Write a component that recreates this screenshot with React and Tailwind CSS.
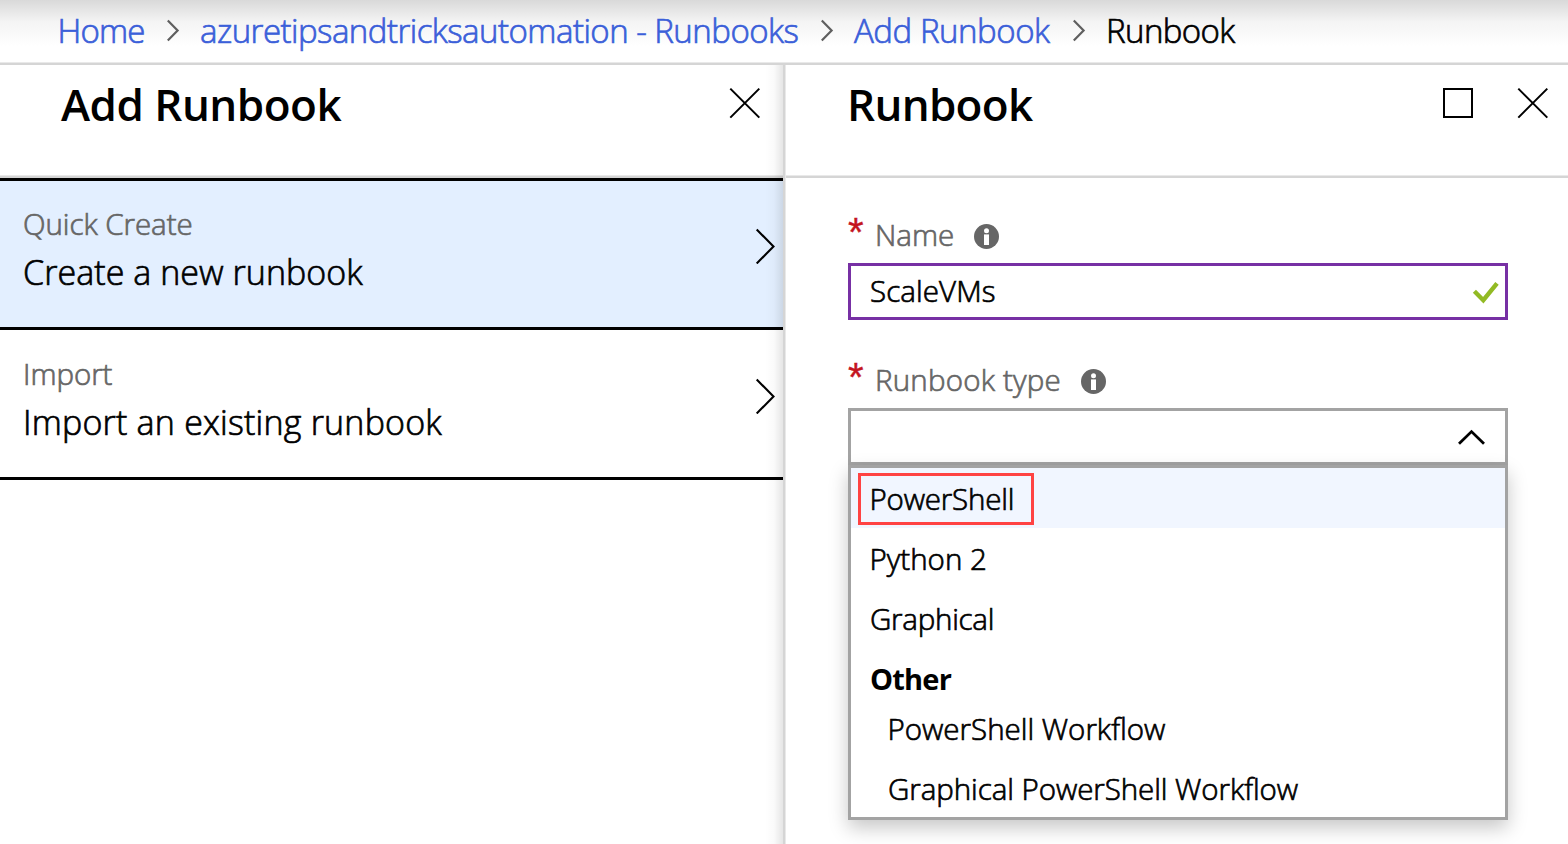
import React from "react";

const thin = "font-light [-webkit-text-stroke:0.7px_currentColor]";

function Separator() {
  return (
    <svg className="mt-0.5 h-6 w-4 shrink-0" viewBox="0 0 16 24" fill="none" stroke="#5f5f5f" strokeWidth="2.2">
      <path d="M0.8 2.6 10.6 12.6 0.8 22.6" />
    </svg>
  );
}

function CloseIcon() {
  return (
    <svg className="h-8 w-8" viewBox="0 0 32 32" fill="none" stroke="#000" strokeWidth="2">
      <path d="M1.3 1.6 30.3 30.6M30.3 1.6 1.3 30.6" />
    </svg>
  );
}

function InfoIcon() {
  return (
    <svg className="h-[25px] w-[25px]" viewBox="0 0 25 25">
      <circle cx="12.5" cy="12.5" r="12.5" fill="#666" />
      <circle cx="12.5" cy="6.7" r="2.5" fill="#fff" />
      <path d="M10 10.4h5V21h-5z" fill="#fff" />
    </svg>
  );
}

function Divider() {
  return (
    <div className="shrink-0">
      <div className="h-px bg-[#e9e9e9]" />
      <div className="h-0.5 bg-[#d5d5d5]" />
    </div>
  );
}

function Option({ kind, title, titleSpacing, active }) {
  return (
    <div className={`flex items-start justify-between border-b-3 border-black pl-[23px] ${active ? "h-[149px] bg-[#e3efff] pt-[19px]" : "h-[150px] bg-white pt-5"}`}>
      <div>
        <div className={`text-[29.5px] leading-[48px] tracking-[-0.05px] text-[#666] ${thin}`}>{kind}</div>
        <div className={`text-[34px] leading-[49px] ${titleSpacing} ${thin}`}>{title}</div>
      </div>
      <svg className="mt-7 mr-[7px] h-9 w-[21px]" viewBox="0 0 21 36" fill="none" stroke="#000" strokeWidth="2.1">
        <path d="M1.7 1.5 18.5 18.5 1.7 35.5" />
      </svg>
    </div>
  );
}

function Label({ children, spacing }) {
  return (
    <div className="flex h-11 items-center">
      <span className="h-11 w-[27px] font-['Liberation_Sans'] text-[40px] leading-[42px] text-[#c4151f] [-webkit-text-stroke:0.4px_currentColor]">*</span>
      <span className={`mr-5 pt-0.5 text-[29.5px] leading-[45px] text-[#666] ${spacing} ${thin}`}>{children}</span>
      <span className="pt-1.5"><InfoIcon /></span>
    </div>
  );
}

export default function App() {
  return (
    <div className="flex h-[844px] w-[1568px] flex-col overflow-hidden bg-white font-['Open_Sans',sans-serif] text-black">
      <nav className={`flex h-[62px] shrink-0 items-start bg-linear-to-b from-[#d9d9d9] via-[#f4f4f4] via-35% to-white to-75% pl-[57.5px] text-[33px] leading-[61px] tracking-[-0.53px] ${thin}`}>
        <a className="w-[109.5px] tracking-[-0.8px] text-[#3b5fd9]">Home</a>
        <span className="flex h-[58px] w-[33px] items-center"><Separator /></span>
        <a className="w-[621px] text-[#3b5fd9]">azuretipsandtricksautomation - Runbooks</a>
        <span className="flex h-[58px] w-[33px] items-center"><Separator /></span>
        <a className="w-[219px] tracking-[-0.45px] text-[#3b5fd9]">Add Runbook</a>
        <span className="flex h-[58px] w-[33px] items-center"><Separator /></span>
        <span className="tracking-[-0.6px]">Runbook</span>
      </nav>
      <Divider />
      <main className="flex min-h-0 flex-1">
        <section className="relative flex w-[783px] flex-col">
          <header className="flex h-[110px] items-start justify-between pr-[22px] pl-[61px]">
            <h1 className="text-[44px] leading-[78px] font-semibold tracking-[-0.5px]">Add Runbook</h1>
            <span className="pt-[22px]"><CloseIcon /></span>
          </header>
          <Divider />
          <div className="border-t-3 border-black">
            <Option kind="Quick Create" title="Create a new runbook" titleSpacing="tracking-[0.05px]" active />
            <Option kind="Import" title="Import an existing runbook" titleSpacing="tracking-[0.2px]" />
          </div>
          <div className="absolute inset-y-0 right-0 w-[18px] bg-linear-to-r from-transparent via-black/2 to-black/10" />
        </section>
        <div className="w-0.5 bg-[#d5d5d5]" />
        <div className="w-px bg-[#e9e9e9]" />
        <section className="flex flex-1 flex-col">
          <header className="flex h-[110px] items-start pr-[19px] pl-[61px]">
            <h1 className="flex-1 text-[44px] leading-[78px] font-semibold tracking-[-0.7px]">Runbook</h1>
            <span className="mt-[23px] mr-[44px] h-[30px] w-[30px] border-2 border-black" />
            <span className="pt-[22px]"><CloseIcon /></span>
          </header>
          <Divider />
          <div className="flex flex-col pt-[33px] pr-[60px] pl-[62px]">
            <Label spacing="tracking-[0px]">Name</Label>
            <div className="mt-2 flex h-[57px] items-start justify-between border-3 border-[#7730a4] pr-[5px] pl-[19px]">
              <span className={`text-[29.5px] leading-[49px] tracking-[0.1px] ${thin}`}>ScaleVMs</span>
              <svg className="mt-3.5 h-6 w-7" viewBox="0 0 28 24" fill="none" stroke="#92ba24" strokeWidth="4.4">
                <path d="M2.4 11.3 11.3 20.2 25 3.3" />
              </svg>
            </div>
            <div className="mt-9"><Label spacing="tracking-[0.2px]">Runbook type</Label></div>
            <div className="mt-2 flex h-[57px] items-start justify-end border-3 border-[#a3a3a3] pr-[18px]">
              <svg className="mt-[17px] h-[18px] w-[30px]" viewBox="0 0 30 18" fill="none" stroke="#000" strokeWidth="2.8">
                <path d="M2 15.8 14.5 3.6 27 15.8" />
              </svg>
            </div>
            <div className={`flex h-[355px] flex-col border-3 border-[#a3a3a3] bg-white text-[29.5px] leading-[62px] shadow-[0_8px_18px_rgba(0,0,0,0.22)] ${thin}`}>
              <div className="flex h-[60px] items-start bg-[#f1f6ff] pt-[5px] pl-[7px]">
                <span className="h-[52px] w-[176px] border-3 border-[#ff4343] pl-[8.5px] leading-[46px] tracking-[-0.2px]">PowerShell</span>
              </div>
              <div className="h-[60px] pl-[18.5px]">Python 2</div>
              <div className="h-[60px] pl-[19px] tracking-[-0.25px]">Graphical</div>
              <div className="h-[50px] pl-[19px] text-[29px] font-bold tracking-[-0.8px] [-webkit-text-stroke:0]">Other</div>
              <div className="h-[60px] pl-[36.5px]">PowerShell Workflow</div>
              <div className="h-[59px] pl-[37px] tracking-[-0.06px]">Graphical PowerShell Workflow</div>
            </div>
          </div>
        </section>
      </main>
    </div>
  );
}
